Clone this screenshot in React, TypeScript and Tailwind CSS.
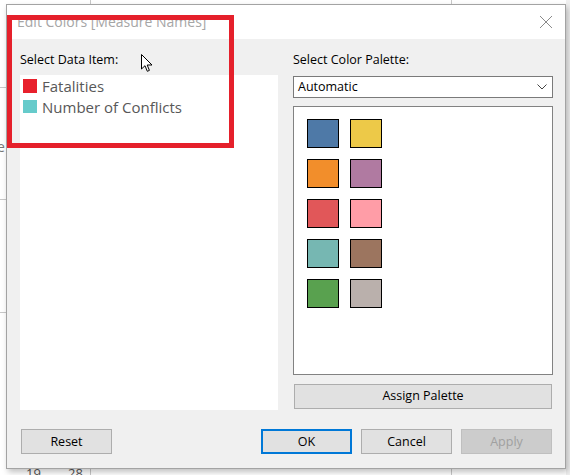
import React from "react";

const palette = [
  ["#4e79a7", "#edc948"],
  ["#f28e2b", "#b07aa1"],
  ["#e15759", "#ff9da7"],
  ["#76b7b2", "#9c755f"],
  ["#59a14f", "#bab0ac"],
];

const font = { fontFamily: '"Open Sans", "Noto Sans", Arial, sans-serif' };

export default function App() {
  return (
    <div
      className="relative w-[570px] h-[475px] overflow-hidden bg-white"
      style={font}
    >
      {/* background canvas fragments */}
      <div className="absolute left-0 top-[87px] w-[6px] h-px bg-[#c8c8c8]" />
      <div className="absolute left-0 top-[199px] w-[6px] h-px bg-[#c8c8c8]" />
      <div className="absolute left-0 top-[312px] w-[6px] h-px bg-[#c8c8c8]" />
      <div className="absolute left-[-3px] top-[136px] text-[14px] text-[#777]">e</div>
      <div className="absolute left-[90px] top-[462px] w-px h-[13px] bg-[#c8c8c8]" />
      <div className="absolute left-[451px] top-[462px] w-px h-[13px] bg-[#c8c8c8]" />
      <div className="absolute left-[90px] top-0 w-px h-[4px] bg-[#c8c8c8]" />
      <div className="absolute left-[451px] top-0 w-px h-[4px] bg-[#c8c8c8]" />
      <div className="absolute left-[26px] top-[464px] text-[13px] text-[#555]">19</div>
      <div className="absolute left-[68px] top-[464px] text-[13px] text-[#555]">28</div>
      <div className="absolute right-0 top-0 w-[4px] h-full bg-[#f0f0f0]" />

      {/* dialog */}
      <div className="relative ml-[6px] pt-[4px]">
        <div className="flex flex-col w-[560px] h-[465px] border border-[#a3a3a3] bg-[#f0f0f0] shadow-[2px_3px_6px_rgba(0,0,0,0.25)]">
          {/* title bar */}
          <div className="flex items-center justify-between h-[34px] bg-white pl-[10px] pr-[12px]">
            <span className="text-[14px] text-[#a6a6a6] leading-none mb-[1px]">
              Edit Colors [Measure Names]
            </span>
            <svg width="14" height="14" viewBox="0 0 14 14" className="mb-[1px]">
              <path d="M1 1 L13 13 M13 1 L1 13" stroke="#8a8a8a" strokeWidth="1" fill="none" />
            </svg>
          </div>

          {/* body */}
          <div className="flex flex-col flex-1 pt-[13px] pl-[13px] pr-[12px] pb-[14px]">
            <div className="flex gap-[15px]">
              {/* left column */}
              <div className="flex flex-col w-[258px]">
                <div className="text-[12.5px] leading-[16px] text-black mb-[7px]">Select Data Item:</div>
                <div className="h-[335px] bg-white pt-0 pl-[3px]">
                  <div className="flex items-center gap-[5px] h-[21px]">
                    <span className="w-[14px] h-[14px] bg-[#e8202c]" />
                    <span className="text-[15px] leading-[20px] text-[#585858]">Fatalities</span>
                  </div>
                  <div className="flex items-center gap-[5px] h-[21px]">
                    <span className="w-[14px] h-[13px] bg-[#66cbcb]" />
                    <span className="text-[15px] leading-[20px] text-[#585858]">Number of Conflicts</span>
                  </div>
                </div>
              </div>

              {/* right column */}
              <div className="flex flex-col w-[260px]">
                <div className="text-[12.5px] leading-[16px] text-black mb-[8px]">Select Color Palette:</div>
                <div className="flex items-center justify-between h-[22px] border border-[#7a7a7a] bg-white pl-[4px] pr-[5px]">
                  <span className="text-[12.5px] text-black">Automatic</span>
                  <svg width="10" height="6" viewBox="0 0 10 6">
                    <path d="M0.5 0.5 L5 5 L9.5 0.5" stroke="#444" strokeWidth="1" fill="none" />
                  </svg>
                </div>
                <div className="mt-[8px] h-[269px] border border-[#828282] bg-white pt-[12px] pl-[13px]">
                  <div className="flex flex-col gap-[11px]">
                    {palette.map((row, i) => (
                      <div key={i} className="flex gap-[11px]">
                        {row.map((c) => (
                          <span
                            key={c}
                            className="w-[32px] h-[29px] border border-black"
                            style={{ backgroundColor: c }}
                          />
                        ))}
                      </div>
                    ))}
                  </div>
                </div>
                <button className="mt-[9px] ml-[1px] w-[258px] h-[25px] border border-[#adadad] bg-[#e1e1e1] text-[12.5px] text-black">
                  Assign Palette
                </button>
              </div>
            </div>

            {/* buttons */}
            <div className="flex items-center justify-between mt-auto pl-[1px] pr-[1px]">
              <button className="w-[91px] h-[25px] border border-[#adadad] bg-[#e1e1e1] text-[12.5px] text-black pt-[1px]">
                Reset
              </button>
              <div className="flex gap-[9px]">
                <button className="w-[91px] h-[25px] border-2 border-[#0078d7] bg-[#e1e1e1] text-[12.5px] text-black pt-[1px]">
                  OK
                </button>
                <button className="w-[91px] h-[25px] border border-[#adadad] bg-[#e1e1e1] text-[12.5px] text-black pt-[1px]">
                  Cancel
                </button>
                <button className="w-[91px] h-[25px] border border-[#bfbfbf] bg-[#cccccc] text-[12.5px] text-[#a0a0a0] pt-[1px]">
                  Apply
                </button>
              </div>
            </div>
          </div>
        </div>
      </div>

      {/* red annotation box */}
      <div className="absolute left-[7px] top-[15px] w-[227px] h-[133px] border-[5px] border-[#e5202b]" />

      {/* mouse cursor */}
      <svg
        className="absolute left-[141px] top-[54px]"
        width="13"
        height="19"
        viewBox="0 0 13 19"
      >
        <path
          d="M0.5 0.5 L0.5 15 L4 11.7 L6.3 17.3 L8.4 16.4 L6.2 11 L11 11 Z"
          fill="white"
          stroke="black"
          strokeWidth="1"
          strokeLinejoin="miter"
        />
      </svg>
    </div>
  );
}
